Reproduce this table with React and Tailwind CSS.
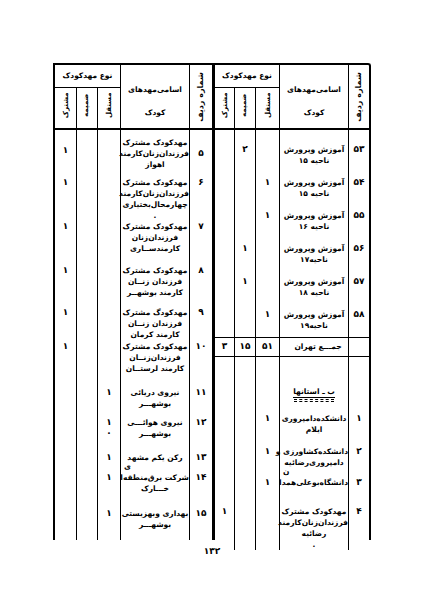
import React from "react";

const LW = ["w-[22px] border-r", "w-[21px] border-r", "w-[23px] border-r", "w-[69px] border-r", "w-[22px]"];
const RW = ["w-[20px] border-r", "w-[21px] border-r", "w-[24px] border-r", "w-[69px] border-r", "w-[20px]"];

const SUP_L = "text-left leading-[10px] pl-[3px]";

const leftRows = [
  { h: "h-[7px]", v: ["", "", ""], lines: [], n: "" },
  { h: "h-[40px]", v: ["۱", "", ""], vp: "pt-[8px]", lines: ["مهدکودک مشترک", "فرزندان‌زنان‌کارمند", "اهواز"], n: "۵", np: "pt-[11px]" },
  { h: "h-[44px]", v: ["۱", "", ""], lines: ["مهدکودک مشترک", "فرزندان‌زنان‌کارمند", "چهارمحال‌بختیاری", "."], n: "۶" },
  { h: "h-[44px]", v: ["۱", "", ""], lines: ["مهدکودک مشترک", "فرزندان‌زنان", "کارمندســاری"], n: "۷" },
  { h: "h-[42px]", v: ["۱", "", ""], lines: ["مهدکودک مشترک", "فرزندان زنــان", "کارمند بوشهــر"], n: "۸" },
  { h: "h-[34px]", v: ["۱", "", ""], lines: ["مهدکودگ مشترک", "فرزندان زنــان", "کارمند کرمان"], n: "۹" },
  { h: "h-[46px]", v: ["۱", "", ""], lines: ["مهدکودک مشترک", "فرزندان‌زنــان", "کارمند لرستــان"], n: "۱۰" },
  { h: "h-[30px]", v: ["", "", "۱"], lines: ["نیروی دریائی", "بوشهـــر"], n: "۱۱" },
  { h: "h-[35px]", v: ["", "", "۱"], vp: "", lines: ["نیروی هوائـــی", "بوشهـــر"], n: "۱۲", dot: true },
  { h: "h-[10px]", v: ["", "", "۱"], lines: ["رکن یکم مشهد"], n: "۱۳" },
  { h: "h-[46px]", v: ["", "", "۱"], vp: "pt-[10px]", lines: [{ t: "ی", c: SUP_L }, "شرکت برق‌منطقه‌ا", "خـــارک"], n: "۱۴", np: "pt-[10px]" },
  { h: "flex-1", v: ["", "", "۱"], lines: ["بهداری وبهزیستی", "بوشهـــر"], n: "۱۵" },
];

const rightRows1 = [
  { h: "h-[14px]", v: ["", "", ""], lines: [], n: "" },
  { h: "h-[33px]", v: ["", "۲", ""], lines: ["آموزش وپرورش", "ناحیه ۱۵"], n: "۵۳" },
  { h: "h-[33px]", v: ["", "", "۱"], lines: ["آموزش وپرورش", "ناحیه ۱۵"], n: "۵۴" },
  { h: "h-[33px]", v: ["", "", "۱"], lines: ["آموزش وپرورش", "ناحیه ۱۶"], n: "۵۵" },
  { h: "h-[33px]", v: ["", "۱", ""], lines: ["آموزش وپرورش", "ناحیه‌۱۷"], n: "۵۶" },
  { h: "h-[33px]", v: ["", "۱", ""], lines: ["آموزش وپرورش", "ناحیه ۱۸"], n: "۵۷" },
  { h: "h-[28px]", v: ["", "", "۱"], lines: ["آموزش وپرورش", "ناحیه۱۹"], n: "۵۸" },
];

const rightRows2 = [
  { h: "h-[33px]", v: ["", "", "۱"], lines: ["دانشکده‌دامپروری", "ایلام"], n: "۱" },
  { h: "h-[21px]", v: ["", "", "۱"], lines: ["دانشکده‌کشاورزی و", "دامپروری‌رضائیه"], n: "۲" },
  { h: "h-[39px]", v: ["", "", "۱"], vp: "pt-[10px]", lines: [{ t: "ن", c: SUP_L }, "دانشگاه‌بوعلی‌همدا"], n: "۳", np: "pt-[10px]" },
  { h: "flex-1", v: ["۱", "", ""], lines: ["مهدکودک مشترک", "فرزندان‌زنان‌کارمند", "رضائیه", "."], n: "۴" },
];

function Row({ r, w }) {
  return (
    <div className={`flex shrink-0 ${r.h}`}>
      {r.v.map((val, i) => (
        <div key={i} className={`${w[i]} shrink-0 border-black text-center leading-[11px] ${r.vp || ""}`}>
          {val}
          {r.dot && i === 2 ? <div className="leading-[6px]">.</div> : null}
        </div>
      ))}
      <div dir="rtl" className={`${w[3]} shrink-0 border-black text-center leading-[11px] whitespace-nowrap text-[7.5px] overflow-visible`}>
        {r.lines.map((l, i) =>
          typeof l === "string" ? (
            <div key={i}>{l}</div>
          ) : (
            <div key={i} className={l.c}>{l.t}</div>
          )
        )}
      </div>
      <div className={`${w[4]} shrink-0 border-black text-center leading-[11px] ${r.np || ""}`}>{r.n}</div>
    </div>
  );
}

function Header({ w }) {
  const isL = w === LW;
  return (
    <div className="flex h-[65px] shrink-0 border-b-2 border-black text-[7.5px]">
      <div className={`${isL ? "w-[66px]" : "w-[65px]"} shrink-0 border-r border-black flex flex-col`}>
        <div dir="rtl" className="h-[23px] border-b border-black flex items-center justify-center whitespace-nowrap">
          نوع مهدکودک
        </div>
        <div className="flex flex-1">
          <div className={`${isL ? "w-[22px]" : "w-[20px]"} shrink-0 border-r border-black flex items-center justify-center`}>
            <span dir="rtl" className="-rotate-90 whitespace-nowrap inline-block -translate-y-[3px] text-[7px]">مشترک</span>
          </div>
          <div className="w-[21px] shrink-0 border-r border-black flex items-center justify-center">
            <span dir="rtl" className="-rotate-90 whitespace-nowrap inline-block -translate-y-[3px] text-[7px]">ضمیمه</span>
          </div>
          <div className={`${isL ? "w-[22px]" : "w-[23px]"} shrink-0 flex items-center justify-center`}>
            <span dir="rtl" className="-rotate-90 whitespace-nowrap inline-block -translate-y-[3px] text-[7px]">مستقل</span>
          </div>
        </div>
      </div>
      <div dir="rtl" className="w-[69px] shrink-0 border-r border-black text-center leading-[11px] pt-[19px] whitespace-nowrap">
        <div>اسامی‌مهدهای</div>
        <div className="mt-[12px]">کودک</div>
      </div>
      <div className={`${isL ? "w-[22px]" : "w-[20px]"} shrink-0 flex items-center justify-center`}>
        <span dir="rtl" className="-rotate-90 whitespace-nowrap inline-block text-[8px]">شماره ردیف</span>
      </div>
    </div>
  );
}

export default function App() {
  return (
    <div className="w-[424px] h-[599px] bg-white overflow-hidden font-['DejaVu_Sans',sans-serif] font-bold text-[9px] text-black">
      <div className="ml-[53px] mt-[63px] w-[318px] h-[477px] border-l-2 border-t-2 border-r-2 border-black rounded-tr-[3px] flex">
        {/* left table */}
        <div className="w-[157px] shrink-0 flex flex-col">
          <Header w={LW} />
          <div className="flex flex-col flex-1">
            {leftRows.map((r, i) => (
              <Row key={i} r={r} w={LW} />
            ))}
          </div>
        </div>
        <div className="w-[3px] shrink-0 bg-black" />
        {/* right table */}
        <div className="w-[154px] shrink-0 flex flex-col">
          <Header w={RW} />
          <div className="flex flex-col flex-1">
            {rightRows1.map((r, i) => (
              <Row key={i} r={r} w={RW} />
            ))}
            <div className="flex h-[20px] shrink-0 border-y border-black">
              <div className="w-[20px] shrink-0 border-r border-black flex items-center justify-center">۳</div>
              <div className="w-[21px] shrink-0 border-r border-black flex items-center justify-center">۱۵</div>
              <div className="w-[24px] shrink-0 border-r border-black flex items-center justify-center">۵۱</div>
              <div dir="rtl" className="w-[69px] shrink-0 border-r border-black flex items-center justify-center whitespace-nowrap text-[7.5px] pl-[8px]">
                جمـــع تهران
              </div>
              <div className="w-[20px] shrink-0" />
            </div>
            <div className="flex h-[56px] shrink-0">
              <div className="w-[20px] shrink-0 border-r border-black" />
              <div className="w-[21px] shrink-0 border-r border-black" />
              <div className="w-[24px] shrink-0 border-r border-black" />
              <div dir="rtl" className="w-[69px] shrink-0 border-r border-black flex flex-col items-center pt-[30px] text-[7.5px]">
                <span className="border-b border-black whitespace-nowrap leading-[10px]">ب ـ استانها</span>
                <span className="w-[40px] h-[3px] mt-[1px] border-y border-dashed border-black" />
              </div>
              <div className="w-[20px] shrink-0" />
            </div>
            {rightRows2.map((r, i) => (
              <Row key={i} r={r} w={RW} />
            ))}
          </div>
        </div>
      </div>
      <div className="ml-[53px] w-[318px] mt-[6px] text-center leading-[11px]">۱۳۲</div>
    </div>
  );
}
